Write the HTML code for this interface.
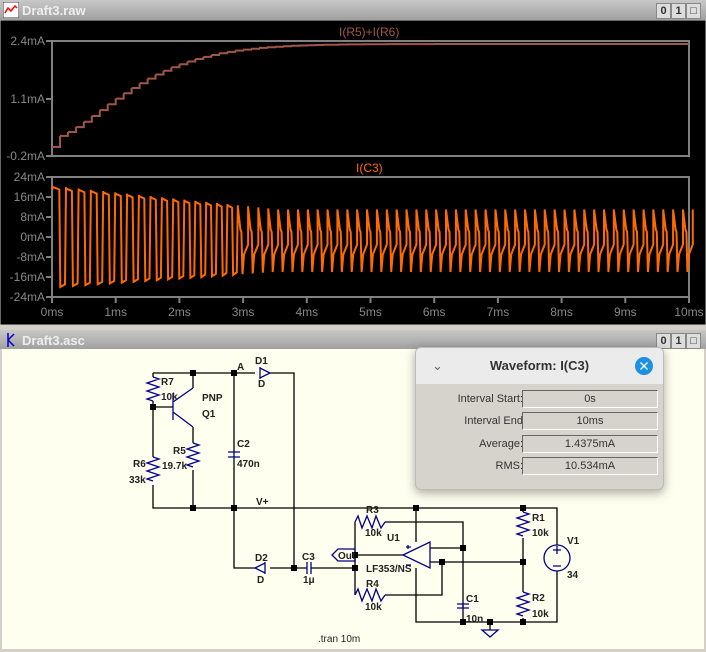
<!DOCTYPE html>
<html><head><meta charset="utf-8"><style>
body{margin:0;width:706px;height:652px;overflow:hidden;background:#d4d0c8;font-family:"Liberation Sans",sans-serif}
.tb{position:absolute;left:0;width:706px;height:20px;background:linear-gradient(#c8c8c8,#a0a0a0);color:#eee;font-weight:bold;font-size:13px}
.tb span{position:absolute;left:22px;top:3px}
.btn{position:absolute;top:3px;width:13px;height:14px;background:#ddd;border:1px solid #888;font-size:11px;text-align:center;line-height:14px;color:#333}
.dlg{position:absolute;left:415px;top:347px;width:247px;height:141px;background:#d6d2cc;border:1px solid #bbb;border-radius:6px;box-shadow:0 3px 10px rgba(0,0,0,.35);overflow:hidden}
.dh{height:36px;background:#ebebeb;font-weight:bold;font-size:13px;color:#333;text-align:center;line-height:36px}
.row{position:absolute;left:0;width:247px;height:20px;font-size:11px;color:#333}
.row .l{position:absolute;right:140px;top:3px}
.row .f{position:absolute;left:106px;width:134px;height:16px;border:1px solid #666;border-right-color:#fff;border-bottom-color:#fff;text-align:center;line-height:16px}
</style></head><body>
<div class="tb" style="top:0"><svg style="position:absolute;left:3px;top:2px" width="16" height="16"><rect x="0" y="0" width="16" height="16" fill="#fff" stroke="#333"/><path d="M2 11 L5 6 L8 9 L12 4 L14 6" stroke="red" stroke-width="1.5" fill="none"/></svg><span>Draft3.raw</span>
<div class="btn" style="left:656px">0</div><div class="btn" style="left:671px">1</div><div class="btn" style="left:686px">□</div></div>
<svg style="position:absolute;left:0;top:20px" width="706" height="305">
<rect x="0" y="0" width="706" height="305" fill="#000" stroke="#ccc"/>
<g font-size="12" fill="#888" font-family="Liberation Sans">
<text x="339" y="16" fill="#a0574a">I(R5)+I(R6)</text>
<text x="356" y="152" fill="#ff6a00">I(C3)</text>
<g text-anchor="end">
<text x="45" y="25">2.4mA</text><text x="45" y="83">1.1mA</text><text x="45" y="140">-0.2mA</text>
<text x="45" y="161">24mA</text><text x="45" y="181">16mA</text><text x="45" y="201">8mA</text><text x="45" y="221">0mA</text><text x="45" y="241">-8mA</text><text x="45" y="261">-16mA</text><text x="45" y="281">-24mA</text>
</g>
<g id="xl" text-anchor="middle"></g>
</g>
<g stroke="#808080" stroke-width="2" fill="none">
<rect x="52" y="21" width="637" height="115"/><rect x="52" y="157" width="637" height="120"/>
<path d="M46 21h6M46 79h6M46 136h6M46 157h6M46 177h6M46 197h6M46 217h6M46 237h6M46 257h6M46 277h6" />
<path id="xt" d=""/>
</g>
<path id="w1" stroke="#a0574a" stroke-width="2" fill="none"/>
<path id="w2" stroke="#ff6a00" stroke-width="2" fill="none"/>
</svg>
<div class="tb" style="top:330px;height:19px"><svg style="position:absolute;left:3px;top:2px" width="16" height="16"><path d="M5 1v14M5 8l6-6M5 8l6 6" stroke="#00c" stroke-width="1.5" fill="none"/></svg><span>Draft3.asc</span>
<div class="btn" style="left:656px">0</div><div class="btn" style="left:671px">1</div><div class="btn" style="left:686px">□</div></div>
<svg style="position:absolute;left:2px;top:349px" width="702" height="300"><rect width="702" height="300" fill="#fffff0"/></svg>
<svg style="position:absolute;left:0;top:0" width="706" height="652">
<g stroke="#000" stroke-width="1.3" fill="none">
<path d="M153 373H255M270 373H294V568M153 373V377M153 401V457M153 485V508H557V545M557 571V622H416V568M416 542V508M153 407H173M193 373V388M193 427V443M193 470V508M234 373V452M234 457V568H255M270 568H307M311 568H355M294 568"/>
<path d="M355 522V595M385 522H463V622M355 555H403M430 548H463M430 562H523M442 562V595H385M523 508V512M523 538V592M523 618V622M490 622V630M463 622V608M463 612"/>
</g>
<g stroke="#00008b" stroke-width="1.3" fill="none">
<path d="M153 377l6 2-12 4 12 4-12 4 12 4-12 4 6 2"/>
<path d="M153 457l6 2-12 4 12 4-12 4 12 4-12 4 6 2"/>
<path d="M193 443l6 2-12 4 12 4-12 4 12 4-12 4 6 2"/>
<path d="M523 512l6 2-12 4 12 4-12 4 12 4-12 4 6 2"/>
<path d="M523 592l6 2-12 4 12 4-12 4 12 4-12 4 6 2"/>
<path d="M355 522l3-6 4 12 5-12 5 12 4-12 5 12 4-6h0"/>
<path d="M355 595l3-6 4 12 5-12 5 12 4-12 5 12 4-6"/>
<path d="M173 393V420M173 402L193 388M173 412L193 427"/>
<path d="M228 452h12M228 457h12M234 452v5"/>
<path d="M457 604h12M457 608h12M463 604V608"/>
<path d="M270 373l-10-5v10zM260 367v12" fill="none"/>
<path d="M255 568l10-5v10zM265 562v12"/>
<path d="M307 562v12M311 562v12"/>
<path d="M403 555L430 542V568Z"/>
<path d="M482 630h16l-8 7z"/>
<circle cx="557" cy="558" r="13"/><path d="M553 550h8M557 546v8M553 566h8"/>
<path d="M332 555l6-6h17v12h-17z"/>
<path d="M406 547h5M408 545v4M406 565h5"/>
</g>
<g fill="#000">
<rect x="190" y="370" width="6" height="6"/><rect x="231" y="370" width="6" height="6"/><rect x="150" y="404" width="6" height="6"/>
<rect x="190" y="505" width="6" height="6"/><rect x="231" y="505" width="6" height="6"/><rect x="413" y="505" width="6" height="6"/><rect x="520" y="505" width="6" height="6"/>
<rect x="291" y="565" width="6" height="6"/><rect x="352" y="552" width="6" height="6"/><rect x="352" y="565" width="6" height="6"/>
<rect x="460" y="545" width="6" height="6"/><rect x="439" y="559" width="6" height="6"/><rect x="520" y="559" width="6" height="6"/>
<rect x="460" y="619" width="6" height="6"/><rect x="487" y="619" width="6" height="6"/><rect x="520" y="619" width="6" height="6"/>
</g>
<g font-size="10" font-weight="bold" fill="#222" font-family="Liberation Sans">
<text x="161" y="385">R7</text><text x="161" y="400">10k</text><text x="202" y="401">PNP</text><text x="202" y="417">Q1</text>
<text x="173" y="454">R5</text><text x="162" y="469">19.7k</text><text x="133" y="467">R6</text><text x="129" y="483">33k</text>
<text x="237" y="447">C2</text><text x="237" y="467">470n</text><text x="237" y="370">A</text><text x="255" y="364">D1</text><text x="258" y="387">D</text>
<text x="256" y="505">V+</text><text x="255" y="561">D2</text><text x="257" y="583">D</text><text x="302" y="560">C3</text><text x="303" y="583">1μ</text>
<text x="366" y="513">R3</text><text x="365" y="536">10k</text><text x="387" y="541">U1</text><text x="338" y="559">Out</text><text x="366" y="572">LF353/NS</text>
<text x="366" y="587">R4</text><text x="365" y="610">10k</text><text x="466" y="602">C1</text><text x="466" y="622">10n</text>
<text x="532" y="521">R1</text><text x="532" y="536">10k</text><text x="532" y="601">R2</text><text x="532" y="617">10k</text>
<text x="567" y="544">V1</text><text x="567" y="578">34</text><text x="318" y="642" font-weight="normal">.tran 10m</text>
</g>
</svg>
<div class="dlg"><div class="dh"><span style="position:absolute;left:16px;font-weight:normal;color:#666">⌄</span>Waveform: I(C3)<svg style="position:absolute;left:219px;top:9px" width="18" height="18"><circle cx="9" cy="9" r="9" fill="#1e90e0"/><path d="M5.5 5.5l7 7M12.5 5.5l-7 7" stroke="#fff" stroke-width="1.3"/></svg></div>
<div class="row" style="top:42px"><span class="l">Interval Start:</span><span class="f">0s</span></div>
<div class="row" style="top:64px"><span class="l">Interval End</span><span class="f">10ms</span></div>
<div class="row" style="top:87px"><span class="l">Average:</span><span class="f">1.4375mA</span></div>
<div class="row" style="top:109px"><span class="l">RMS:</span><span class="f">10.534mA</span></div>
</div>
<script>
var X=function(t){return 52+63.7*t};
var xl='',xt='';
for(var i=0;i<=10;i++){xl+='<text x="'+X(i)+'" y="296">'+i+'ms</text>';xt+='M'+X(i)+' 277v6';}
document.getElementById('xl').innerHTML=xl;document.getElementById('xt').setAttribute('d',xt);
var d='M52 127',t,y;
for(var k=1;k<=80;k++){t=k*0.125;var v=0.2+2.13*(1-Math.exp(-Math.pow(t/1.5,1.5)));y=127-v*44.2;d+='H'+X(t).toFixed(1)+'V'+y.toFixed(1)+'M'+X(t).toFixed(1)+' '+y.toFixed(1);}
d+='H689';document.getElementById('w1').setAttribute('d',d);
var Y=function(m){return 217-m*2.5};
var s='M52 '+Y(19),tt=0.02;
while(tt<10){var f=Math.min(1,tt/3.4);var p=0.2-0.045*f;var hi=20-9*f,lo=-20+6*f;
 var x0=X(tt),xh=X(tt+p*0.55),xe=X(tt+p),W=p*63.7;
 if(f<0.85){s+='L'+x0.toFixed(1)+' '+Y(hi)+'L'+(xh-1).toFixed(1)+' '+Y(hi-1)+'L'+xh.toFixed(1)+' '+Y(lo)+'L'+(xe-1).toFixed(1)+' '+Y(lo+1)+'L'+xe.toFixed(1)+' '+Y(hi);}
 else{s+='L'+x0.toFixed(1)+' '+Y(hi)+'L'+(x0+W*0.25).toFixed(1)+' '+Y(3)+'L'+(x0+W*0.35).toFixed(1)+' '+Y(2)+'L'+(x0+W*0.45).toFixed(1)+' '+Y(lo)+'L'+(x0+W*0.6).toFixed(1)+' '+Y(-7)+'L'+xe.toFixed(1)+' '+Y(-3)+'L'+xe.toFixed(1)+' '+Y(hi);}
 tt+=p;}
document.getElementById('w2').setAttribute('d',s);
</script>
</body></html>
